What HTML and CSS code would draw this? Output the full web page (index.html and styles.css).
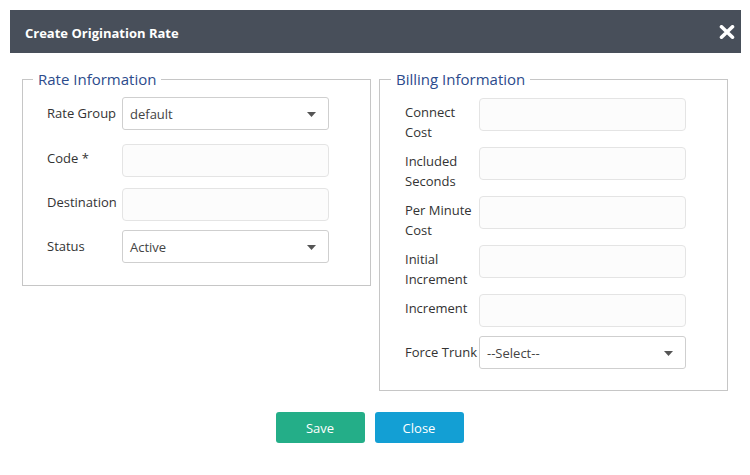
FILE: index.html
```html
<!DOCTYPE html>
<html>
<head>
<meta charset="utf-8">
<link rel="stylesheet" href="styles.css">
</head>
<body>
<div class="modal">
  <div class="modal-header">
    <span class="title">Create Origination Rate</span>
    <svg class="close-x" width="16" height="14" viewBox="0 0 16 14"><path d="M2.5 1.8 L13.5 12.2 M13.5 1.8 L2.5 12.2" stroke="#fff" stroke-width="3.6" stroke-linecap="round"/></svg>
  </div>
  <div class="modal-body">
    <fieldset class="box box-left">
      <legend>Rate Information</legend>
      <div class="row r1">
        <label class="lbl sel">Rate Group</label>
        <div class="select"><span>default</span><svg class="caret" width="9" height="5" viewBox="0 0 9 5"><path d="M0 0 H9 L4.5 5 Z" fill="#555"/></svg></div>
      </div>
      <div class="row r2">
        <label class="lbl">Code *</label>
        <div class="input"></div>
      </div>
      <div class="row r3">
        <label class="lbl">Destination</label>
        <div class="input"></div>
      </div>
      <div class="row">
        <label class="lbl sel">Status</label>
        <div class="select"><span>Active</span><svg class="caret" width="9" height="5" viewBox="0 0 9 5"><path d="M0 0 H9 L4.5 5 Z" fill="#555"/></svg></div>
      </div>
    </fieldset>
    <fieldset class="box box-right">
      <legend>Billing Information</legend>
      <div class="row tall">
        <label class="lbl">Connect Cost</label>
        <div class="input"></div>
      </div>
      <div class="row tall">
        <label class="lbl">Included Seconds</label>
        <div class="input"></div>
      </div>
      <div class="row tall">
        <label class="lbl">Per Minute Cost</label>
        <div class="input"></div>
      </div>
      <div class="row tall">
        <label class="lbl">Initial Increment</label>
        <div class="input"></div>
      </div>
      <div class="row r5">
        <label class="lbl">Increment</label>
        <div class="input"></div>
      </div>
      <div class="row">
        <label class="lbl sel">Force Trunk</label>
        <div class="select"><span>--Select--</span><svg class="caret" width="9" height="5" viewBox="0 0 9 5"><path d="M0 0 H9 L4.5 5 Z" fill="#555"/></svg></div>
      </div>
    </fieldset>
  </div>
  <div class="actions">
    <button class="btn btn-save">Save</button>
    <button class="btn btn-close">Close</button>
  </div>
</div>
</body>
</html>
```
FILE: styles.css
```css
* { box-sizing: border-box; }
html, body { margin: 0; padding: 0; background: #fff; }
body {
  font-family: "Open Sans", "Noto Sans", sans-serif;
  font-size: 13px;
  color: #333;
  width: 750px;
  height: 475px;
  overflow: hidden;
}
.modal { padding: 10px 9px 0 10px; }
.modal-header {
  height: 43px;
  background: #484f5a;
  display: flex;
  align-items: center;
  justify-content: space-between;
  padding: 2px 6px 0 15px;
}
.title {
  color: #fff;
  font-weight: 700;
  font-size: 13px;
}
.close-x { display: block; margin-top: -1px; }
.modal-body {
  display: flex;
  align-items: flex-start;
  gap: 8px;
  padding: 16px 0 0 12px;
}
.box {
  width: 349px;
  margin: 0;
  border: 1px solid #c6c6c6;
  min-width: 0;
}
.box legend {
  font-size: 15px;
  line-height: 20px;
  color: #2c4b8c;
  padding: 0 5px;
  margin-left: -14px;
}
.box-left { padding: 8px 0 22px 24px; }
.box-right { padding: 9px 0 21px 25px; }
.row { display: flex; align-items: flex-start; }
.lbl {
  line-height: 20px;
  padding-top: 4px;
  color: #333;
}
.lbl.sel { padding-top: 6px; }
.box-left .lbl { width: 75px; }
.box-right .lbl { width: 74px; }
.r1 { margin-bottom: 14px; }
.r2 { margin-bottom: 11px; }
.r3 { margin-bottom: 9px; }
.tall { margin-bottom: 5px; }
.tall .lbl { height: 44px; }
.r5 { margin-bottom: 9px; }
.input {
  width: 207px;
  height: 33px;
  border: 1px solid #e4e4e4;
  border-radius: 4px;
  background: #fcfcfc;
}
.select {
  width: 207px;
  height: 33px;
  border: 1px solid #cfcfcf;
  border-radius: 3px;
  background: #fff;
  display: flex;
  align-items: center;
  justify-content: space-between;
  padding: 1px 12px 0 7px;
  color: #444;
}
.caret { display: block; }
.actions {
  display: flex;
  justify-content: center;
  gap: 10px;
  padding: 21px 12px 0 0;
}
.btn {
  width: 89px;
  height: 31px;
  border: 0;
  border-radius: 3px;
  color: #fff;
  font-family: "Open Sans", "Noto Sans", sans-serif;
  font-size: 13px;
  padding: 0;
}
.btn-save { background: #24ae88; }
.btn-close { background: #139fd4; }
```
